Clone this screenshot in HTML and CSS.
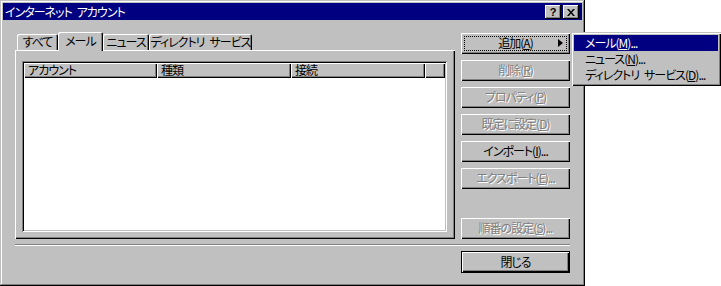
FILE: index.html
```html
<!DOCTYPE html>
<html lang="ja">
  <head>
    <meta charset="UTF-8" />
    <title>インターネット アカウント</title>
    <link rel="stylesheet" href="styles.css">
  </head>
  <body>
    <div class="window">
      <div class="titlebar">
        <span class="title">インターネット&ensp;アカウント</span>
        <div class="caption-buttons">
          <span class="cap-btn help">?</span>
          <span class="cap-btn close">
            <svg width="8" height="7" viewBox="0 0 8 7">
              <path d="M0 0h2l2 2.5L6 0h2L5 3.5 8 7H6L4 4.5 2 7H0l3-3.5z" fill="#000"/>
            </svg>
          </span>
        </div>
      </div>

      <div class="main">
        <div class="left">
          <div class="tabs">
            <span class="tab tab-all">すべて</span>
            <span class="tab tab-mail selected">メール</span>
            <span class="tab tab-news">ニュース</span>
            <span class="tab tab-dir">ディレクトリ&ensp;サービス</span>
          </div>
          <div class="panel">
            <div class="listbox">
              <div class="list-header">
                <span class="col col-account">アカウント</span>
                <span class="col col-type">種類</span>
                <span class="col col-conn">接続</span>
                <span class="col col-fill"></span>
              </div>
            </div>
          </div>
        </div>

        <div class="right">
          <div class="btn focused">追加(<u>A</u>)<span class="arrow"></span></div>
          <div class="btn disabled">削除(<u>R</u>)</div>
          <div class="btn disabled">プロパティ(<u>P</u>)</div>
          <div class="btn disabled">既定に設定(<u>D</u>)</div>
          <div class="btn">インポート(<u>I</u>)...</div>
          <div class="btn disabled">エクスポート(<u>E</u>)...</div>
          <div class="btn disabled order">順番の設定(<u>S</u>)...</div>
        </div>
      </div>

      <div class="separator"></div>

      <div class="footer">
        <div class="btn default">閉じる</div>
      </div>
    </div>

    <div class="popup">
      <div class="menu-item active">メール(<u>M</u>)...</div>
      <div class="menu-item">ニュース(<u>N</u>)...</div>
      <div class="menu-item">ディレクトリ&ensp;サービス(<u>D</u>)...</div>
    </div>
  </body>
</html>
```

FILE: styles.css
```css
body {
  margin: 0;
  padding: 0;
  background: #ffffff;
  font-family: "Noto Sans CJK JP", "Noto Sans", sans-serif;
  font-size: 12px;
  font-feature-settings: "palt";
  letter-spacing: -1px;
  color: #000;
}
.window {
  width: 585px;
  height: 286px;
  box-sizing: border-box;
  padding: 3px;
  background: #c0c0c0;
  box-shadow: inset -1px -1px #000, inset 1px 1px #c0c0c0, inset -2px -2px #808080, inset 2px 2px #fff;
}
.titlebar {
  height: 17px;
  background: #000080;
  color: #fff;
  display: flex;
  align-items: center;
  justify-content: space-between;
  padding: 0 3px 0 2px;
}
.title {
  line-height: 16px;
}
.caption-buttons {
  display: flex;
  gap: 2px;
  margin-top: 1px;
}
.cap-btn {
  width: 16px;
  height: 14px;
  box-sizing: border-box;
  background: #c0c0c0;
  box-shadow: inset -1px -1px #000, inset 1px 1px #fff, inset -2px -2px #808080;
  display: flex;
  align-items: center;
  justify-content: center;
  color: #000;
  font-family: "Liberation Sans", Arial, sans-serif;
  font-weight: bold;
  font-size: 11px;
  line-height: 12px;
  letter-spacing: 0;
}
.main {
  display: flex;
  padding: 12px 12px 0 12px;
}
.left {
  width: 440px;
}
.tabs {
  display: flex;
  align-items: flex-end;
  height: 18px;
  padding-left: 2px;
}
.tab {
  height: 16px;
  box-sizing: border-box;
  line-height: 15px;
  text-align: center;
  border-radius: 2px 2px 0 0;
  box-shadow: inset 1px 1px #fff, inset -1px 0 #000, inset -2px 0 #808080;
  white-space: nowrap;
}
.tab-all { width: 41px; }
.tab-mail { width: 45px; }
.tab-news { width: 46px; }
.tab-dir { width: 103px; }
.tab.selected {
  height: 19px;
  margin-bottom: -1px;
  position: relative;
  z-index: 1;
  background: #c0c0c0;
  line-height: 17px;
}
.panel {
  height: 189px;
  box-sizing: border-box;
  padding: 11px 7px;
  box-shadow: inset 1px 1px #fff, inset -1px -1px #000, inset -2px -2px #808080;
}
.listbox {
  width: 425px;
  height: 171px;
  box-sizing: border-box;
  padding: 2px;
  background: #fff;
  box-shadow: inset 1px 1px #808080, inset -1px -1px #fff, inset 2px 2px #000, inset -2px -2px #c0c0c0;
}
.list-header {
  display: flex;
  height: 15px;
}
.col {
  box-sizing: border-box;
  background: #c0c0c0;
  padding-left: 4px;
  line-height: 14px;
  box-shadow: inset 1px 1px #fff, inset -1px -1px #000, inset -2px -2px #808080;
}
.col-account { width: 133px; }
.col-type { width: 134px; }
.col-conn { width: 134px; }
.col-fill { flex: 1; }
.right {
  width: 109px;
  margin-left: 6px;
  margin-top: 1px;
  height: 206px;
  display: flex;
  flex-direction: column;
  gap: 6px;
}
.btn {
  height: 21px;
  box-sizing: border-box;
  background: #c0c0c0;
  box-shadow: inset 1px 1px #fff, inset -1px -1px #000, inset -2px -2px #808080;
  text-align: center;
  line-height: 20px;
  position: relative;
  white-space: nowrap;
}
.btn.disabled {
  color: #808080;
  text-shadow: 1px 1px 0 #fff;
}
.btn.focused::after {
  content: "";
  position: absolute;
  top: 3px;
  left: 3px;
  right: 3px;
  bottom: 3px;
  border: 1px dotted #000;
}
.arrow {
  position: absolute;
  right: 7px;
  top: 6px;
  width: 0;
  height: 0;
  border-left: 5px solid #000;
  border-top: 4px solid transparent;
  border-bottom: 4px solid transparent;
}
.btn.order {
  margin-top: auto;
}
.separator {
  margin: 5px 12px 0 12px;
  height: 0;
  border-top: 1px solid #808080;
  border-bottom: 1px solid #fff;
}
.footer {
  display: flex;
  justify-content: flex-end;
  padding: 5px 12px 0 12px;
}
.btn.default {
  width: 109px;
  height: 22px;
  line-height: 21px;
  box-shadow: inset 1px 1px #000, inset -1px -1px #000, inset 2px 2px #fff, inset -2px -2px #000, inset -3px -3px #808080;
}
.popup {
  position: absolute;
  left: 571px;
  top: 32px;
  width: 150px;
  height: 54px;
  box-sizing: border-box;
  padding: 3px 3px;
  background: #c0c0c0;
  box-shadow: inset 1px 1px #c0c0c0, inset 2px 2px #fff, inset -1px -1px #000, inset -2px -2px #808080;
}
.menu-item {
  height: 16px;
  line-height: 16px;
  padding-left: 11px;
  white-space: nowrap;
}
.menu-item.active {
  background: #000080;
  color: #fff;
}
```
